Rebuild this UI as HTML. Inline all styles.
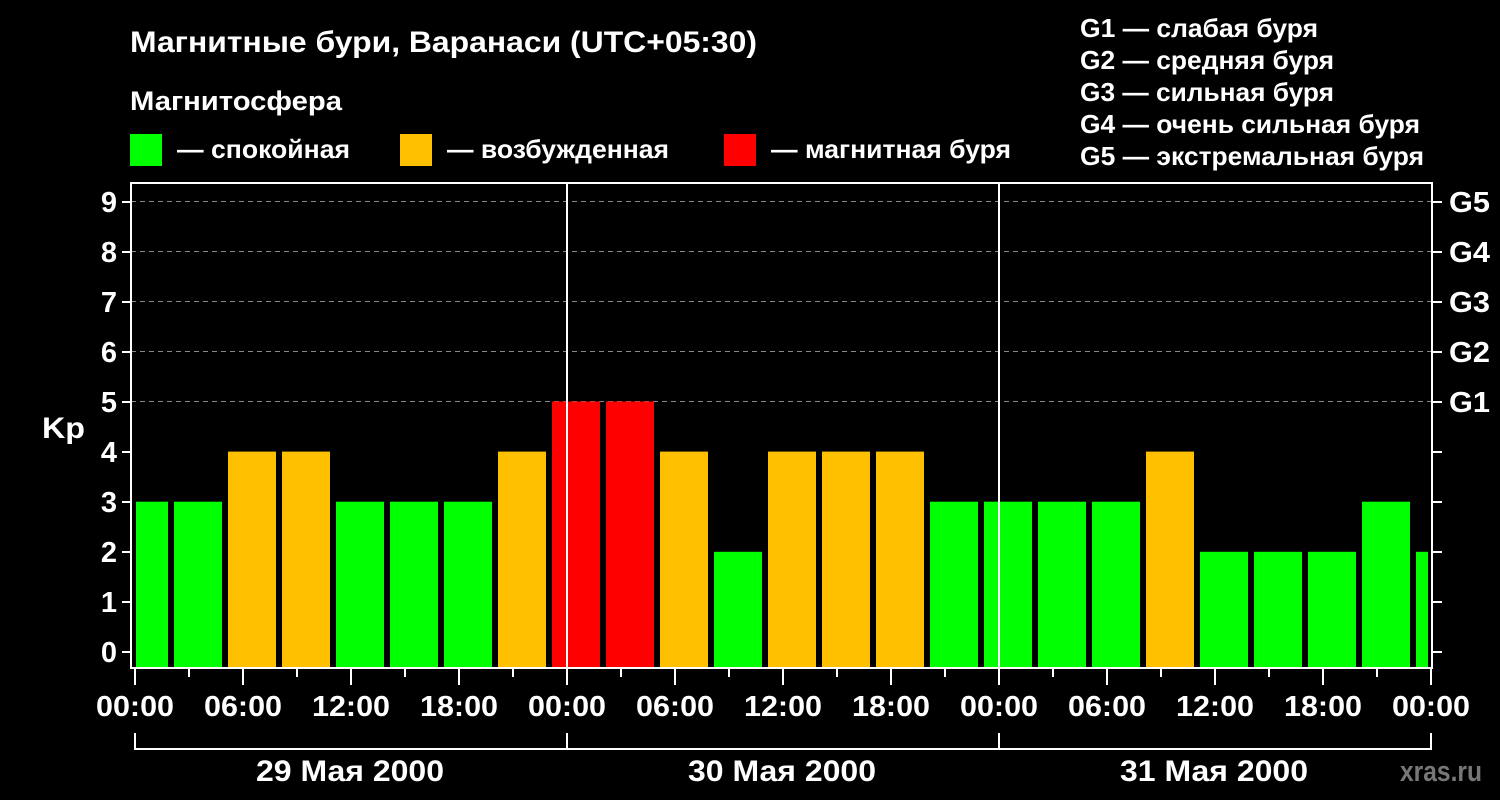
<!DOCTYPE html>
<html><head><meta charset="utf-8"><style>
html,body{margin:0;padding:0;background:#000;}
svg{display:block}
text{font-family:"Liberation Sans",sans-serif;font-weight:bold;fill:#fff}
</style></head><body>
<svg width="1500" height="800" viewBox="0 0 1500 800" xmlns="http://www.w3.org/2000/svg">
<rect width="1500" height="800" fill="#000"/>
<text x="130" y="52" font-size="30" textLength="627" lengthAdjust="spacingAndGlyphs">Магнитные бури, Варанаси (UTC+05:30)</text>
<text x="130" y="110" font-size="27" textLength="212" lengthAdjust="spacingAndGlyphs">Магнитосфера</text>
<rect x="130" y="134" width="32" height="32" fill="#00ff00"/>
<text x="177" y="158" font-size="26" textLength="173" lengthAdjust="spacingAndGlyphs">— спокойная</text>
<rect x="400" y="134" width="32" height="32" fill="#ffc000"/>
<text x="447" y="158" font-size="26" textLength="222" lengthAdjust="spacingAndGlyphs">— возбужденная</text>
<rect x="724" y="134" width="32" height="32" fill="#ff0000"/>
<text x="771" y="158" font-size="26" textLength="240" lengthAdjust="spacingAndGlyphs">— магнитная буря</text>
<g font-size="26">
<text x="1080" y="37" textLength="238" lengthAdjust="spacingAndGlyphs">G1 — слабая буря</text>
<text x="1080" y="69" textLength="254" lengthAdjust="spacingAndGlyphs">G2 — средняя буря</text>
<text x="1080" y="101" textLength="254" lengthAdjust="spacingAndGlyphs">G3 — сильная буря</text>
<text x="1080" y="133" textLength="340" lengthAdjust="spacingAndGlyphs">G4 — очень сильная буря</text>
<text x="1080" y="165" textLength="344" lengthAdjust="spacingAndGlyphs">G5 — экстремальная буря</text>
</g>
<g stroke="#888" stroke-width="1" stroke-dasharray="5,4">
<line x1="131" y1="201.5" x2="1432" y2="201.5"/>
<line x1="131" y1="251.5" x2="1432" y2="251.5"/>
<line x1="131" y1="301.5" x2="1432" y2="301.5"/>
<line x1="131" y1="351.5" x2="1432" y2="351.5"/>
<line x1="131" y1="401.5" x2="1432" y2="401.5"/>
</g>
<g>
<rect x="136" y="501.7" width="32" height="165.3" fill="#00ff00"/>
<rect x="174" y="501.7" width="48" height="165.3" fill="#00ff00"/>
<rect x="228" y="451.6" width="48" height="215.4" fill="#ffc000"/>
<rect x="282" y="451.6" width="48" height="215.4" fill="#ffc000"/>
<rect x="336" y="501.7" width="48" height="165.3" fill="#00ff00"/>
<rect x="390" y="501.7" width="48" height="165.3" fill="#00ff00"/>
<rect x="444" y="501.7" width="48" height="165.3" fill="#00ff00"/>
<rect x="498" y="451.6" width="48" height="215.4" fill="#ffc000"/>
<rect x="552" y="401.5" width="48" height="265.5" fill="#ff0000"/>
<rect x="606" y="401.5" width="48" height="265.5" fill="#ff0000"/>
<rect x="660" y="451.6" width="48" height="215.4" fill="#ffc000"/>
<rect x="714" y="551.8" width="48" height="115.2" fill="#00ff00"/>
<rect x="768" y="451.6" width="48" height="215.4" fill="#ffc000"/>
<rect x="822" y="451.6" width="48" height="215.4" fill="#ffc000"/>
<rect x="876" y="451.6" width="48" height="215.4" fill="#ffc000"/>
<rect x="930" y="501.7" width="48" height="165.3" fill="#00ff00"/>
<rect x="984" y="501.7" width="48" height="165.3" fill="#00ff00"/>
<rect x="1038" y="501.7" width="48" height="165.3" fill="#00ff00"/>
<rect x="1092" y="501.7" width="48" height="165.3" fill="#00ff00"/>
<rect x="1146" y="451.6" width="48" height="215.4" fill="#ffc000"/>
<rect x="1200" y="551.8" width="48" height="115.2" fill="#00ff00"/>
<rect x="1254" y="551.8" width="48" height="115.2" fill="#00ff00"/>
<rect x="1308" y="551.8" width="48" height="115.2" fill="#00ff00"/>
<rect x="1362" y="501.7" width="48" height="165.3" fill="#00ff00"/>
<rect x="1416" y="551.8" width="12" height="115.2" fill="#00ff00"/>
</g>
<g stroke="#fff" stroke-width="2" fill="none">
<rect x="131" y="183" width="1301" height="485"/>
<line x1="567" y1="183" x2="567" y2="668"/>
<line x1="999" y1="183" x2="999" y2="668"/>
<path d="M122 652H131M122 602H131M122 552H131M122 502H131M122 452H131M122 402H131M122 352H131M122 302H131M122 252H131M122 202H131"/>
<path d="M1432 652H1442M1432 602H1442M1432 552H1442M1432 502H1442M1432 452H1442M1432 402H1442M1432 352H1442M1432 302H1442M1432 252H1442M1432 202H1442"/>
<path d="M135 669V685M243 669V685M351 669V685M459 669V685M567 669V685M675 669V685M783 669V685M891 669V685M999 669V685M1107 669V685M1215 669V685M1323 669V685M1431 669V685"/>
<path d="M189 669V677M297 669V677M405 669V677M513 669V677M621 669V677M729 669V677M837 669V677M945 669V677M1053 669V677M1161 669V677M1269 669V677M1377 669V677"/>
<polyline points="135,733 135,749 1431,749 1431,733"/>
<line x1="567" y1="733" x2="567" y2="749"/>
<line x1="999" y1="733" x2="999" y2="749"/>
</g>
<g font-size="29" text-anchor="end">
<text x="117" y="662">0</text><text x="117" y="612">1</text><text x="117" y="562">2</text><text x="117" y="512">3</text><text x="117" y="462">4</text><text x="117" y="412">5</text><text x="117" y="362">6</text><text x="117" y="312">7</text><text x="117" y="262">8</text><text x="117" y="212">9</text>
</g>
<text x="42" y="438" font-size="30" textLength="43" lengthAdjust="spacingAndGlyphs">Kp</text>
<g font-size="29">
<text x="1449" y="412" textLength="41" lengthAdjust="spacingAndGlyphs">G1</text>
<text x="1449" y="362" textLength="41" lengthAdjust="spacingAndGlyphs">G2</text>
<text x="1449" y="312" textLength="41" lengthAdjust="spacingAndGlyphs">G3</text>
<text x="1449" y="262" textLength="41" lengthAdjust="spacingAndGlyphs">G4</text>
<text x="1449" y="212" textLength="41" lengthAdjust="spacingAndGlyphs">G5</text>
</g>
<g font-size="29" text-anchor="middle">
<text x="135" y="716" textLength="78" lengthAdjust="spacingAndGlyphs">00:00</text>
<text x="243" y="716" textLength="78" lengthAdjust="spacingAndGlyphs">06:00</text>
<text x="351" y="716" textLength="78" lengthAdjust="spacingAndGlyphs">12:00</text>
<text x="459" y="716" textLength="78" lengthAdjust="spacingAndGlyphs">18:00</text>
<text x="567" y="716" textLength="78" lengthAdjust="spacingAndGlyphs">00:00</text>
<text x="675" y="716" textLength="78" lengthAdjust="spacingAndGlyphs">06:00</text>
<text x="783" y="716" textLength="78" lengthAdjust="spacingAndGlyphs">12:00</text>
<text x="891" y="716" textLength="78" lengthAdjust="spacingAndGlyphs">18:00</text>
<text x="999" y="716" textLength="78" lengthAdjust="spacingAndGlyphs">00:00</text>
<text x="1107" y="716" textLength="78" lengthAdjust="spacingAndGlyphs">06:00</text>
<text x="1215" y="716" textLength="78" lengthAdjust="spacingAndGlyphs">12:00</text>
<text x="1323" y="716" textLength="78" lengthAdjust="spacingAndGlyphs">18:00</text>
<text x="1431" y="716" textLength="78" lengthAdjust="spacingAndGlyphs">00:00</text>
</g>
<g font-size="30" text-anchor="middle">
<text x="350" y="781" textLength="188" lengthAdjust="spacingAndGlyphs">29 Мая 2000</text>
<text x="782" y="781" textLength="188" lengthAdjust="spacingAndGlyphs">30 Мая 2000</text>
<text x="1214" y="781" textLength="188" lengthAdjust="spacingAndGlyphs">31 Мая 2000</text>
</g>
<text x="1400" y="781" font-size="29" textLength="82" lengthAdjust="spacingAndGlyphs" style="fill:#777">xras.ru</text>
</svg>
</body></html>
